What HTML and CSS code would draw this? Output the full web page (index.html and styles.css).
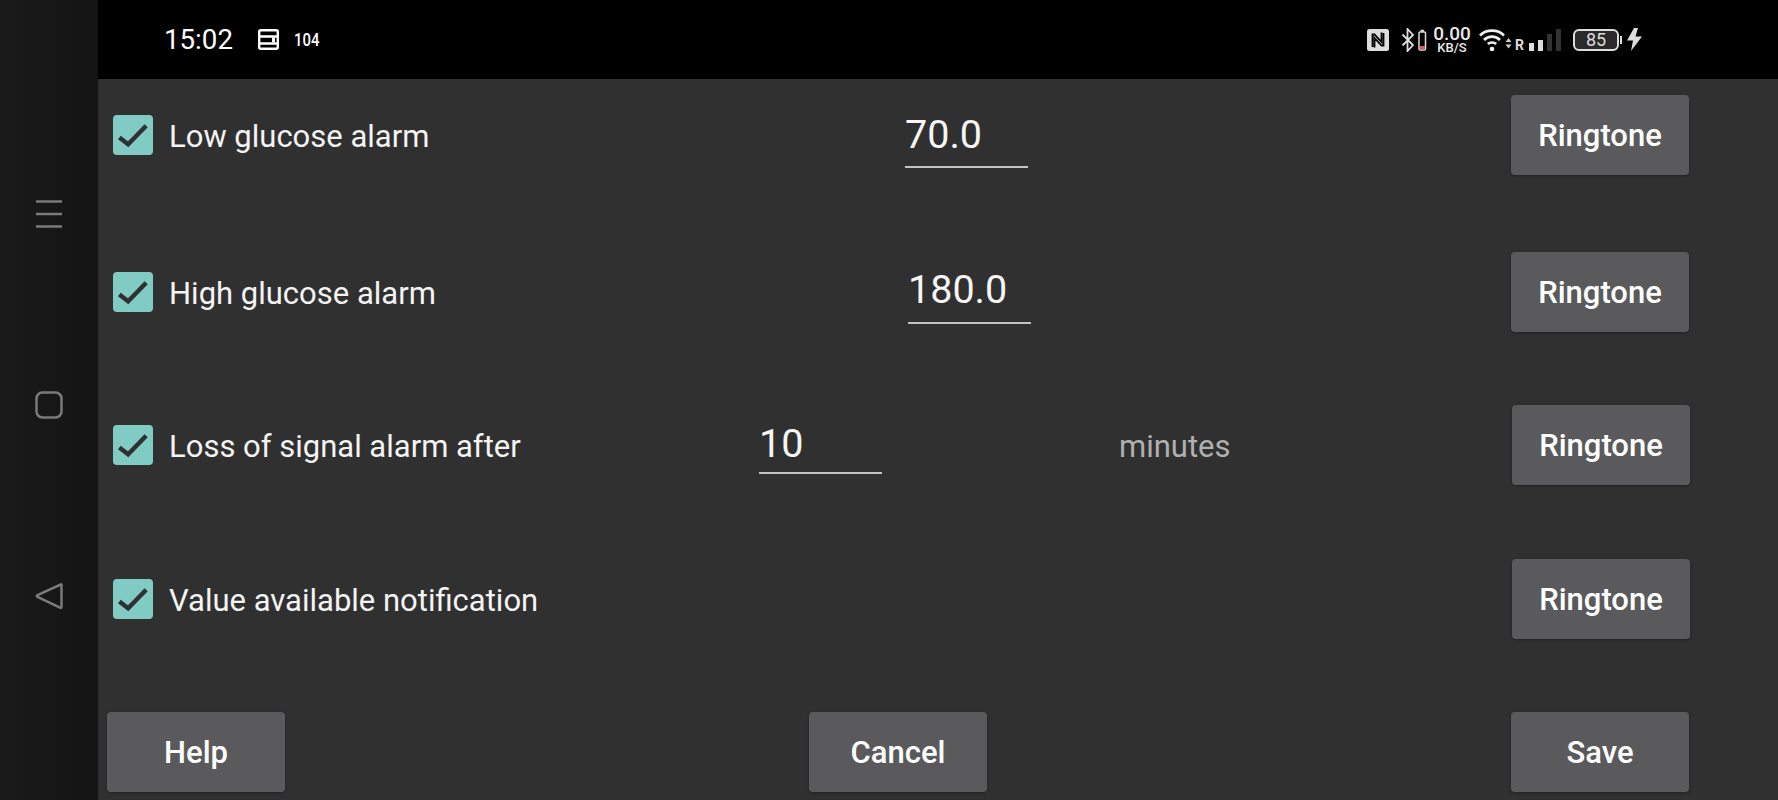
FILE: index.html
```html
<!DOCTYPE html>
<html>
<head>
<meta charset="UTF-8">
<title>Alarm settings</title>
<link rel="stylesheet" href="styles.css">
</head>
<body>
	<div class="phone">
		<div class="navBar">
			<svg class="navIcon" width="28" height="28" viewBox="0 0 28 28"><path d="M1 1.500H27M1 14H27M1 26.500H27"/></svg>
			<svg class="navIcon" width="28" height="28" viewBox="0 0 28 28"><rect x="1.500" y="1.500" width="25" height="25" rx="6"/></svg>
			<svg class="navIcon" width="28" height="28" viewBox="0 0 28 28"><path d="M26 2.500Q26.500 2 26.500 3V25Q26.500 26.500 25 25.500L2.500 15Q1 14 2.500 13Z"/></svg>
		</div>
		<div class="screen">
			<div class="statusBar">
				<div class="statusLeft">
					<span class="clock">15:02</span>
					<svg class="notifIcon" width="21" height="21" viewBox="0 0 21 21"><rect x="1.200" y="1.200" width="18.600" height="18.600" rx="1.500" fill="none" stroke="#fff" stroke-width="2.400"/><path d="M1 7.500H20M1 14.500H20" stroke="#fff" stroke-width="2.400"/><rect x="14" y="8.500" width="3" height="5" fill="#fff"/></svg>
					<span class="notifCount">104</span>
				</div>
				<div class="statusRight">
					<svg width="22" height="22" viewBox="0 0 22 22"><rect width="22" height="22" rx="2.500" fill="#dedede"/><path d="M5.500 18V5.500H7.500L14.500 13V3.500M16.500 4V16.500H14.500L7.500 9V18.500" fill="none" stroke="#000" stroke-width="1.800"/></svg>
					<svg class="btIcon" width="26" height="24" viewBox="0 0 26 24"><path d="M1.500 6.500L12 17L6.500 23V1L12 7L1.500 17.500" fill="none" stroke="#ddd" stroke-width="1.800"/><rect x="18" y="4" width="6.500" height="18" rx="1" fill="none" stroke="#ddd" stroke-width="1.500"/><rect x="19.500" y="1.800" width="3.500" height="2" fill="#ddd"/><rect x="18.800" y="18" width="5" height="3.500" fill="#e0566a"/></svg>
					<div class="speed">
						<span class="speedValue">0.00</span>
						<span class="speedUnit">KB/S</span>
					</div>
					<svg class="wifiIcon" width="33" height="24" viewBox="0 0 33 24"><path d="M1 7.500C7 1 19 1 25 7.500M5 12C9.500 7.500 16.500 7.500 21 12M8.800 16C11 14 15 14 17.200 16" fill="none" stroke="#eee" stroke-width="2.600"/><circle cx="13" cy="21" r="2.300" fill="#eee"/><path d="M26.500 14L29.500 10L32.500 14ZM26.500 16.500H32.500L29.500 20.500Z" fill="#ccc"/></svg>
					<span class="roaming">R</span>
					<div class="signal">
						<span class="signalBar barOne"></span>
						<span class="signalBar barTwo"></span>
						<span class="signalBar barThree"></span>
						<span class="signalBar barFour"></span>
					</div>
					<div class="battery"><span class="batteryLevel">85</span></div>
					<span class="batteryTip"></span>
					<svg class="boltIcon" width="15" height="23" viewBox="0 0 15 23"><path d="M7 0L0 12.500H6L4 23L15 8.500H8.500L11 0Z" fill="#ddd"/></svg>
				</div>
			</div>

			<div class="settings">
				<div class="row rowFirst">
					<div class="checkLabel labelLow">
						<span class="checkBox"><svg width="40" height="40" viewBox="0 0 41 41"><path d="M6.500 23L15.500 30L34 11" class="tick"/></svg></span>
						<span class="labelText">Low glucose alarm</span>
					</div>
					<div class="valueBox valueLow"><span class="valueText">70.0</span></div>
					<button class="appButton ringtone">Ringtone</button>
				</div>
				<div class="row rowSecond">
					<div class="checkLabel labelHigh">
						<span class="checkBox"><svg width="40" height="40" viewBox="0 0 41 41"><path d="M6.500 23L15.500 30L34 11" class="tick"/></svg></span>
						<span class="labelText">High glucose alarm</span>
					</div>
					<div class="valueBox valueHigh"><span class="valueText">180.0</span></div>
					<button class="appButton ringtone">Ringtone</button>
				</div>
				<div class="row rowThird">
					<div class="checkLabel labelLoss">
						<span class="checkBox"><svg width="40" height="40" viewBox="0 0 41 41"><path d="M6.500 23L15.500 30L34 11" class="tick"/></svg></span>
						<span class="labelText">Loss of signal alarm after</span>
					</div>
					<div class="valueBox valueLoss"><span class="valueText">10</span></div>
					<span class="unitText">minutes</span>
					<button class="appButton ringtone shifted">Ringtone</button>
				</div>
				<div class="row rowFourth">
					<div class="checkLabel">
						<span class="checkBox"><svg width="40" height="40" viewBox="0 0 41 41"><path d="M6.500 23L15.500 30L34 11" class="tick"/></svg></span>
						<span class="labelText">Value available notification</span>
					</div>
					<button class="appButton ringtone shifted">Ringtone</button>
				</div>
				<div class="bottomRow">
					<button class="appButton">Help</button>
					<button class="appButton">Cancel</button>
					<button class="appButton">Save</button>
				</div>
			</div>
		</div>
	</div>
</body>
</html>
```

FILE: styles.css
```css
html, body {
	margin: 0;
	padding: 0;
	background-color: #303030;
}

.phone {
	display: flex;
	width: 1778px;
	height: 800px;
	overflow: hidden;
	font-family: Roboto, "Liberation Sans", sans-serif;
}

.navBar {
	width: 98px;
	height: 800px;
	flex-shrink: 0;
	box-sizing: border-box;
	padding: 200px 0 0 35px;
	display: flex;
	flex-direction: column;
	gap: 163px;
	background: linear-gradient(to right, #1a1a1a, #141414);
}

.navIcon {
	fill: none;
	stroke: #7a7a7a;
	stroke-width: 2.500;
}

.screen {
	flex: 1;
	display: flex;
	flex-direction: column;
}

/* status bar */
.statusBar {
	height: 79px;
	flex-shrink: 0;
	background-color: #000;
	display: flex;
	align-items: center;
	justify-content: space-between;
	padding: 0 136px 0 66px;
}

.statusLeft, .statusRight {
	display: flex;
	align-items: center;
}

.clock {
	color: #fff;
	font-size: 27.700px;
	width: 94px;
}

.notifCount {
	color: #fff;
	font-size: 17.500px;
	font-weight: 500;
	margin-left: 15px;
	transform: scaleX(0.85);
	transform-origin: left center;
}

.btIcon {
	margin-left: 12px;
}

.speed {
	display: flex;
	flex-direction: column;
	align-items: center;
	width: 38px;
	margin-left: 6px;
	color: #e8e8e8;
}

.speedValue {
	font-size: 19px;
	font-weight: 500;
	line-height: 16px;
}

.speedUnit {
	font-size: 13px;
	font-weight: 500;
	line-height: 12px;
}

.wifiIcon {
	margin-left: 8px;
}

.roaming {
	color: #ddd;
	font-size: 14px;
	font-weight: 700;
	margin: 10px 0 0 3px;
}

.signal {
	display: flex;
	align-items: flex-end;
	gap: 4px;
	height: 22px;
	margin-left: 5px;
}

.signalBar {
	width: 5px;
	background-color: #ddd;
}

.barOne {
	height: 8px;
}

.barTwo {
	height: 11px;
}

.barThree {
	height: 17px;
	background-color: #333;
}

.barFour {
	height: 22px;
	background-color: #333;
}

.battery {
	width: 46px;
	height: 22px;
	box-sizing: border-box;
	border: 2px solid #ddd;
	border-radius: 6px;
	margin-left: 12px;
	background-color: #2a2a2a;
	display: flex;
	align-items: center;
	justify-content: center;
}

.batteryLevel {
	color: #ddd;
	font-size: 18px;
}

.batteryTip {
	width: 2px;
	height: 8px;
	background-color: #ddd;
	margin-left: 1px;
}

.boltIcon {
	margin-left: 5px;
}

/* settings */
.settings {
	flex: 1;
	background-color: #303030;
	box-sizing: border-box;
	padding: 16px 89px 0 0;
}

.row {
	display: flex;
	align-items: center;
	height: 80px;
	padding-left: 15px;
}

.rowSecond {
	margin-top: 77px;
}

.rowThird {
	margin-top: 73px;
}

.rowFourth {
	margin-top: 74px;
}

.checkLabel {
	display: flex;
	align-items: center;
	gap: 16px;
}

.labelLow {
	width: 792px;
}

.labelHigh {
	width: 795px;
}

.labelLoss {
	width: 646px;
}

.checkBox {
	width: 40px;
	height: 40px;
	background-color: #80cbc4;
	border-radius: 4px;
	display: block;
	flex-shrink: 0;
}

.checkBox svg {
	display: block;
}

.tick {
	fill: none;
	stroke: #303030;
	stroke-width: 4.500;
}

.labelText {
	color: #f4f4f4;
	font-size: 31px;
	margin-top: 2px;
}

.valueBox {
	width: 123px;
	box-sizing: border-box;
	align-self: flex-start;
	border-bottom: 2px solid #c4c4c4;
	color: #f6f6f6;
	font-size: 39.500px;
	line-height: 46px;
}

.valueLow {
	margin-top: 17px;
	height: 56px;
}

.valueHigh {
	margin-top: 15px;
	height: 57px;
}

.valueLoss {
	margin-top: 16px;
	height: 53px;
}

.unitText {
	color: #b0b0b0;
	font-size: 31px;
	margin: 2px 0 0 237px;
}

.appButton {
	width: 178px;
	height: 80px;
	border: none;
	border-radius: 4px;
	background-color: #5a5a5c;
	color: #fff;
	font-family: Roboto, "Liberation Sans", sans-serif;
	font-size: 31px;
	font-weight: 500;
	padding: 0;
	box-shadow: 0 1px 3px rgba(0, 0, 0, 0.3);
}

.ringtone {
	margin-left: auto;
}

.shifted {
	margin-right: -1px;
}

.bottomRow {
	display: flex;
	justify-content: space-between;
	margin-top: 73px;
	padding-left: 9px;
}
```
